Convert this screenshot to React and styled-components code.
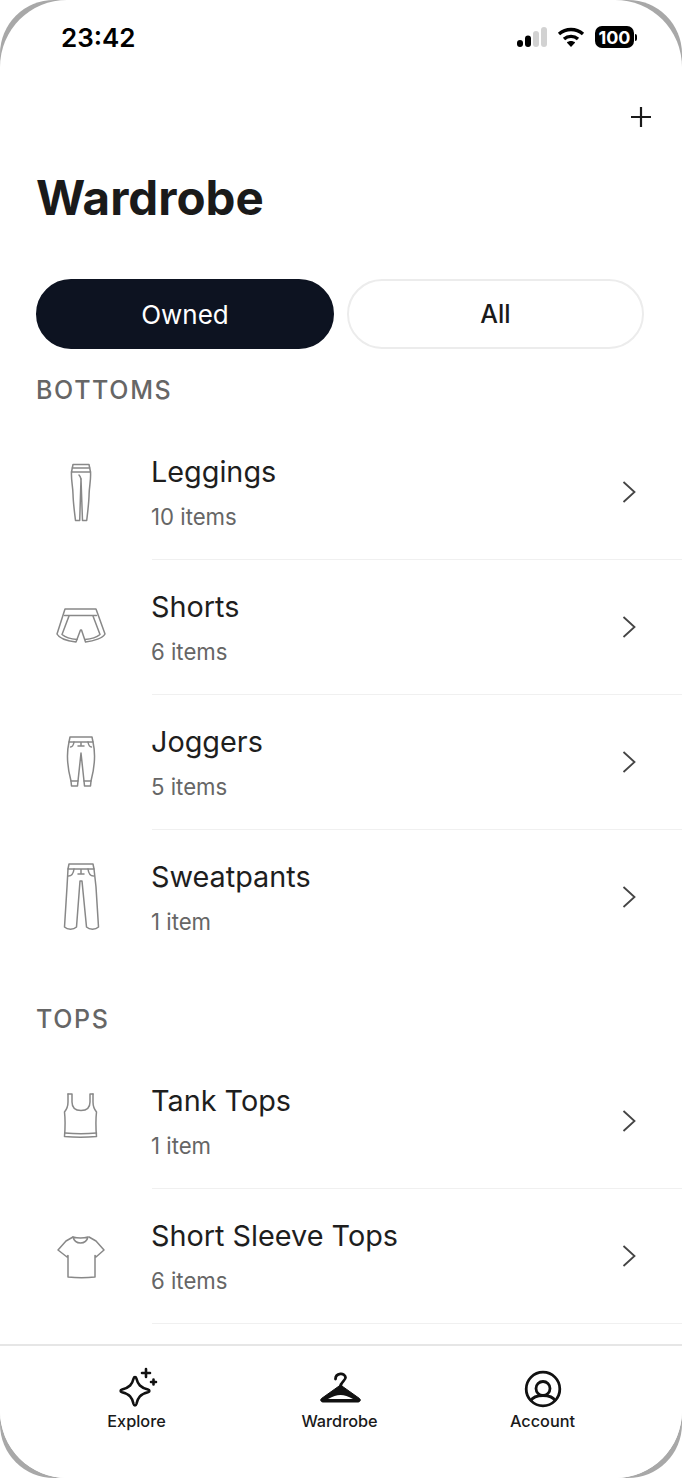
import React from "react";
import styled, { createGlobalStyle } from "styled-components";

const sections = [
  {
    title: "BOTTOMS",
    items: [
      { name: "Leggings", count: "10 items", icon: "leggings" },
      { name: "Shorts", count: "6 items", icon: "shorts" },
      { name: "Joggers", count: "5 items", icon: "joggers" },
      { name: "Sweatpants", count: "1 item", icon: "sweatpants", last: true },
    ],
  },
  {
    title: "TOPS",
    items: [
      { name: "Tank Tops", count: "1 item", icon: "tank" },
      { name: "Short Sleeve Tops", count: "6 items", icon: "tee" },
    ],
  },
];

const garments = {
  leggings: (
    <>
      <path d="M22 11.500h16l1.500 7.500H20.500zM21 15h18" />
      <path d="M20.500 19c-.5 8 1.300 14 1.500 22 .2 9 1.500 18 2.500 26.500h4.200L30 26l1.500 41.500h4.200c1-8.500 2.200-17.500 2.400-26.500.2-8 2-14 1.400-22" />
      <path d="M30 26c-.5-2-1-3-2-4" />
    </>
  ),
  shorts: (
    <>
      <path d="M14 21h31l9 25c-2 4-11 7-19.500 8L30.500 42h-1L25 54C16.500 53 8 50 6 46z" />
      <path d="M13.500 27.500h32" />
      <path d="M18 28l-7 18.500c3 2.500 9 4.500 15 5M42 28l7 18.500c-3 2.500-9 4.500-15 5" />
    </>
  ),
  joggers: (
    <>
      <path d="M19 14h22l1 5H18zM30 19v4M27 23h6" />
      <path d="M18 19c-2.500 11-2 24 2 39h7L30 30l3 28h7c4-15 4.500-28 2-39" />
      <path d="M20 58l.5 5h6l.5-5M40 58l-.5 5h-6l-.5-5M19.500 24c2 0 3-2 3.500-5M40.500 24c-2 0-3-2-3.500-5" />
    </>
  ),
  sweatpants: (
    <>
      <path d="M18 6h24l1 5H17zM30 11v5M27 16h6" />
      <path d="M17 11l-1 18-2.500 40c3 3 9 3 12 0L29 23h2l4.500 46c3 3 9 3 12 0L45 29l-2-18" />
      <path d="M17.500 18c3 0 5-3 5.500-7M42.500 18c-3 0-5-3-5.500-7" />
    </>
  ),
  tank: (
    <>
      <path d="M17 12v8c0 4-1 7-3.500 10 .8 7 .8 15 0 24.500 10 1 22 1 32 0-.8-9.500-.8-17.500 0-24.500C43 27 42 24 42 20v-8" />
      <path d="M21 12v8c0 6 4 8.500 9 8.500s9-2.500 9-8.500v-8M17 12h4M39 12h3" />
      <path d="M14 51c10 1 22 1 31.500 0" />
    </>
  ),
  tee: (
    <>
      <path d="M22 20l-7 4-8 9 9 7 1-1.500V60c9 1 18 1 27 0V38.500l1 1.500 8-7-8-9-7-4" />
      <path d="M22 20c4 1 11 1 15 0M22 20c1 4 4 6 7.500 6s6.500-2 7.500-6" />
    </>
  ),
};

function Garment({ type }) {
  return (
    <GarmentSvg viewBox="0 0 60 80" aria-hidden="true">
      {garments[type]}
    </GarmentSvg>
  );
}

function Chevron() {
  return (
    <ChevronSvg viewBox="0 0 16 24" aria-hidden="true">
      <path d="M2.500 2L13.500 12L2.500 22" />
    </ChevronSvg>
  );
}

function CategoryRow({ item }) {
  return (
    <Row>
      <Garment type={item.icon} />
      <RowBody $last={item.last}>
        <RowText>
          <RowName>{item.name}</RowName>
          <RowCount>{item.count}</RowCount>
        </RowText>
        <Chevron />
      </RowBody>
    </Row>
  );
}

function StatusIcons() {
  return (
    <StatusRight>
      <svg width="30" height="20" viewBox="0 0 30 20" aria-hidden="true">
        <rect x="0" y="13" width="6" height="7" rx="3" fill="#000" />
        <rect x="8" y="8.500" width="6" height="11.500" rx="3" fill="#000" />
        <rect x="16" y="4" width="6" height="16" rx="3" fill="#d2d2d2" />
        <rect x="24" y="0" width="6" height="20" rx="3" fill="#d2d2d2" />
      </svg>
      <svg width="28" height="20" viewBox="0 0 28 20" fill="none" stroke="#000" strokeWidth="3.400" aria-hidden="true">
        <path d="M2 7c7-6 17-6 24 0" />
        <path d="M7 12c4-3.500 10-3.500 14 0" />
        <path d="M14 20l-4.200-4.400c2.400-2 6-2 8.400 0z" fill="#000" stroke="none" />
      </svg>
      <Battery>
        <BatteryBody>100</BatteryBody>
        <BatteryCap />
      </Battery>
    </StatusRight>
  );
}

function SparkleIcon() {
  return (
    <svg width="44" height="44" viewBox="0 0 44 44" fill="none" stroke="#111" strokeWidth="2.600" strokeLinecap="round" strokeLinejoin="round" aria-hidden="true">
      <path d="M18.600 11.500c.5-2 2.300-2 2.800 0 1.500 6 4 9 11.500 11 2 .6 2 2.200 0 2.800-7.500 2-10 5-11.500 11.700-.5 2-2.300 2-2.800 0-1.500-6.700-4-9.700-11.500-11.700-2-.6-2-2.200 0-2.800 7.500-2 10-5 11.500-11z" />
      <path d="M31 2v8M27 6h8" />
      <path d="M38.500 12.500v5M36 15h5" />
    </svg>
  );
}

function HangerIcon() {
  return (
    <svg width="44" height="44" viewBox="0 0 44 44" fill="none" aria-hidden="true">
      <path d="M17.500 12c0-6 9.500-7 10-1.500 .3 3-5 4.500-5 9" stroke="#111" strokeWidth="2.800" strokeLinecap="round" />
      <path d="M22.500 18L3.500 31.500c-1.500 1.200-.8 3.500 1.500 3.500h35c2.300 0 3-2.300 1.500-3.500z" fill="#111" stroke="#111" strokeWidth="1" strokeLinejoin="round" />
      <path d="M10 32C15 29.500 18.500 28 22.500 28S30 29.500 35 32z" fill="#fff" />
    </svg>
  );
}

function AccountIcon() {
  return (
    <svg width="44" height="44" viewBox="0 0 44 44" fill="none" stroke="#111" strokeWidth="2.800" aria-hidden="true">
      <circle cx="22" cy="22" r="16.800" />
      <circle cx="22" cy="21.500" r="7" />
      <path d="M9.500 34c2-3.500 6.500-5.500 12.500-5.500s10.500 2 12.500 5.500" />
    </svg>
  );
}

const tabs = [
  { label: "Explore", Icon: SparkleIcon },
  { label: "Wardrobe", Icon: HangerIcon },
  { label: "Account", Icon: AccountIcon },
];

export default function App() {
  return (
    <>
      <GlobalStyle />
      <Bezel>
        <Phone>
          <StatusBar>
            <Clock>23:42</Clock>
            <StatusIcons />
          </StatusBar>
          <TopBar>
            <PlusButton aria-label="Add">
              <svg width="22" height="22" viewBox="0 0 22 22" stroke="#1a1a1a" strokeWidth="2.200" aria-hidden="true">
                <path d="M11 1v20M1 11h20" />
              </svg>
            </PlusButton>
          </TopBar>
          <Title>Wardrobe</Title>
          <Segments>
            <Segment $active>Owned</Segment>
            <Segment>All</Segment>
          </Segments>
          <Content>
            {sections.map((section) => (
              <Section key={section.title}>
                <SectionTitle>{section.title}</SectionTitle>
                {section.items.map((item) => (
                  <CategoryRow key={item.name} item={item} />
                ))}
              </Section>
            ))}
          </Content>
          <TabBar>
            {tabs.map(({ label, Icon }) => (
              <Tab key={label}>
                <Icon />
                <TabLabel>{label}</TabLabel>
              </Tab>
            ))}
          </TabBar>
        </Phone>
      </Bezel>
    </>
  );
}

const GlobalStyle = createGlobalStyle`
  html, body {
    margin: 0;
    padding: 0;
    background: #fff;
  }
  body {
    font-family: Inter, "Liberation Sans", sans-serif;
  }
`;

/* grey shell with a tighter radius, so only a crescent shows at each corner */
const Bezel = styled.div`
  width: 682px;
  height: 1478px;
  overflow: hidden;
  background: #a8a8a8;
  border-radius: 54px;
`;

const Phone = styled.div`
  display: flex;
  flex-direction: column;
  width: 682px;
  height: 1478px;
  overflow: hidden;
  background: #fff;
  border-radius: 67px;
`;

const StatusBar = styled.div`
  display: flex;
  flex: none;
  box-sizing: border-box;
  justify-content: space-between;
  align-items: center;
  height: 74px;
  padding: 0 45px 0 61px;
`;

const Clock = styled.span`
  font-size: 26px;
  font-weight: 600;
  color: #000;
`;

const StatusRight = styled.div`
  display: flex;
  align-items: center;
  gap: 10px;
`;

const Battery = styled.div`
  display: flex;
  align-items: center;
  gap: 1px;
`;

const BatteryBody = styled.div`
  display: flex;
  justify-content: center;
  align-items: center;
  width: 39px;
  height: 22px;
  border-radius: 7px;
  background: #000;
  color: #fff;
  font-size: 18px;
  font-weight: 700;
`;

const BatteryCap = styled.div`
  width: 2px;
  height: 7px;
  border-radius: 0 2px 2px 0;
  background: #000;
`;

const TopBar = styled.div`
  display: flex;
  flex: none;
  box-sizing: border-box;
  justify-content: flex-end;
  height: 74px;
  padding: 32px 30px 0 0;
`;

const PlusButton = styled.button`
  width: 22px;
  height: 22px;
  padding: 0;
  border: 0;
  background: transparent;
  line-height: 0;
`;

const Title = styled.h1`
  flex: none;
  margin: 0;
  padding-left: 36px;
  font-size: 47.500px;
  line-height: 100px;
  font-weight: 700;
  color: #1a1a1a;
`;

const Segments = styled.div`
  display: grid;
  flex: none;
  grid-template-columns: 298px 297px;
  gap: 13px;
  margin-top: 31px;
  padding-left: 36px;
`;

const Segment = styled.div`
  display: flex;
  box-sizing: border-box;
  justify-content: center;
  align-items: center;
  height: 70px;
  border-radius: 35px;
  border: 2px solid ${(p) => (p.$active ? "#0d1321" : "#ececec")};
  background: ${(p) => (p.$active ? "#0d1321" : "#fff")};
  color: ${(p) => (p.$active ? "#fff" : "#1a1a1a")};
  font-size: ${(p) => (p.$active ? "26px" : "25px")};
  font-weight: ${(p) => (p.$active ? 400 : 500)};
`;

const Content = styled.div`
  flex: 1;
  min-height: 0;
  overflow: hidden;
`;

const Section = styled.section`
  padding-bottom: 13px;
`;

const SectionTitle = styled.h2`
  margin: 0;
  padding: 24px 0 17px 36px;
  font-size: 25px;
  line-height: 35px;
  font-weight: 500;
  letter-spacing: 1.650px;
  color: #666;
`;

const Row = styled.div`
  display: flex;
  align-items: stretch;
  height: 135px;
  padding-left: 51px;
`;

const GarmentSvg = styled.svg`
  flex: none;
  align-self: center;
  width: 60px;
  height: 80px;
  margin-right: 41px;
  fill: none;
  stroke: #888;
  stroke-width: 1.500;
  stroke-linejoin: round;
  stroke-linecap: round;
`;

const RowBody = styled.div`
  display: flex;
  flex: 1;
  justify-content: space-between;
  align-items: center;
  padding-right: 45px;
  border-bottom: 1px solid ${(p) => (p.$last ? "transparent" : "#f0f0f0")};
`;

const RowText = styled.div`
  display: flex;
  flex-direction: column;
  gap: 13px;
  margin-left: -1px;
  padding-top: 3px;
`;

const RowName = styled.span`
  font-size: 28.800px;
  line-height: 34px;
  color: #1e1e1e;
`;

const RowCount = styled.span`
  font-size: 22.200px;
  line-height: 30px;
  color: #666;
`;

const ChevronSvg = styled.svg`
  width: 16px;
  height: 24px;
  fill: none;
  stroke: #444;
  stroke-width: 1.800;
`;

const TabBar = styled.nav`
  display: grid;
  flex: none;
  box-sizing: border-box;
  grid-template-columns: repeat(3, 203px);
  height: 134px;
  padding: 21px 0 0 35px;
  border-top: 2px solid #e6e6e6;
  background: #fff;
`;

const Tab = styled.div`
  display: flex;
  flex-direction: column;
  align-items: center;
`;

const TabLabel = styled.span`
  font-size: 16.300px;
  font-weight: 500;
  color: #1a1a1a;
`;
